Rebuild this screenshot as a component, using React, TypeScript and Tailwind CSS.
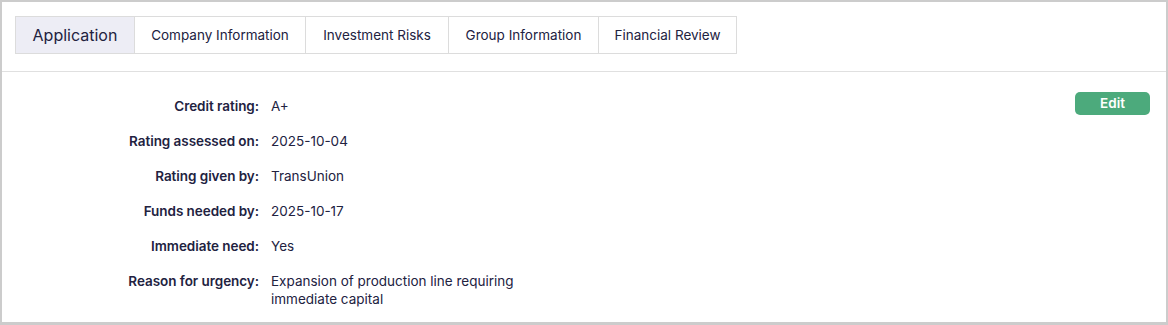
const tabs = [
  { label: "Application", width: "w-[120px]" },
  { label: "Company Information", width: "w-[171px]" },
  { label: "Investment Risks", width: "w-[143px]" },
  { label: "Group Information", width: "w-[150px]" },
  { label: "Financial Review", width: "w-[138px]" },
];

const rows = [
  { label: "Credit rating:", value: "A+" },
  { label: "Rating assessed on:", value: "2025-10-04" },
  { label: "Rating given by:", value: "TransUnion" },
  { label: "Funds needed by:", value: "2025-10-17" },
  { label: "Immediate need:", value: "Yes" },
  { label: "Reason for urgency:", value: "Expansion of production line requiring immediate capital" },
];

export default function App() {
  return (
    <div
      className="h-[325px] w-[1168px] border-2 border-b-[3px] border-[#cccccc] bg-white text-[#22223f]"
      style={{ fontFamily: "Inter, 'Noto Sans', sans-serif" }}
    >
      <div className="border-b border-[#e0e0e0] px-[13px] pt-[14px] pb-[17px]">
        <div className="flex h-[38px]">
          {tabs.map((t, i) => (
            <div
              key={t.label}
              className={`${t.width} flex items-center justify-center border-y border-r border-[#dcdcdc] ${
                i === 0 ? "border-l bg-[#ededf5] text-[16px]" : "bg-white text-[13.5px]"
              }`}
            >
              {t.label}
            </div>
          ))}
        </div>
      </div>

      <div className="flex items-start justify-between pl-[13px] pr-[16px]">
        <div className="flex flex-col gap-[17px] pt-[25px] text-[13.5px] leading-[18px]">
          {rows.map((r) => (
            <div key={r.label} className="flex gap-[12px]">
              <div className="w-[244px] text-right font-semibold tracking-[-0.05px]">{r.label}</div>
              <div className="w-[262px]">{r.value}</div>
            </div>
          ))}
        </div>
        <div className="pt-[20px]">
          <button
            type="button"
            className="block h-[23px] w-[75px] rounded-[5px] bg-[#4caa7c] text-[13.5px] font-semibold text-white"
          >
            Edit
          </button>
        </div>
      </div>
    </div>
  );
}
